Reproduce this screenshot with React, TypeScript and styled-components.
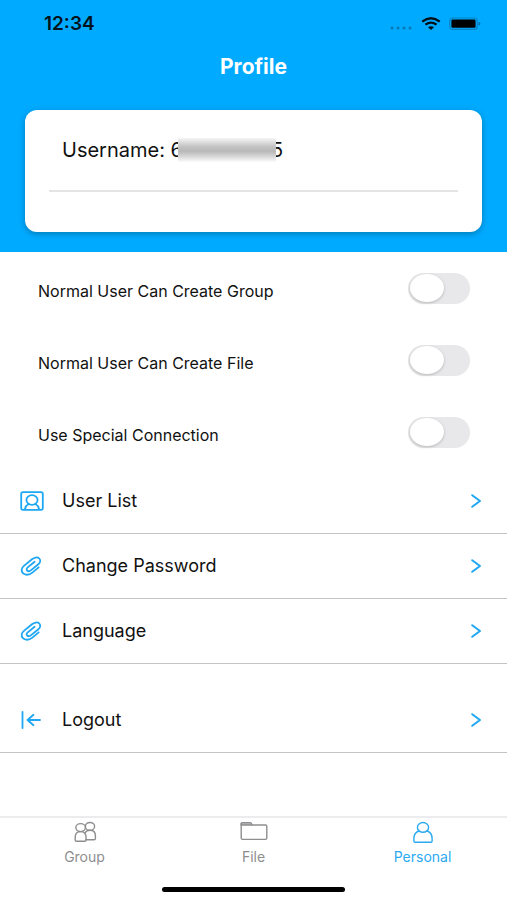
import React, { useState } from "react";
import styled, { createGlobalStyle } from "styled-components";

const blue = "#00aaff";
const iconBlue = "#1ea7f2";

const GlobalStyle = createGlobalStyle`
  *, *::before, *::after { box-sizing: border-box; }
  body {
    margin: 0;
    background: #fff;
    color: #111;
    font-family: Inter, "Liberation Sans", sans-serif;
  }
  button, input { font: inherit; }
`;

const Screen = styled.div`
  display: flex;
  flex-direction: column;
  min-height: 100vh;
  background: #fff;
`;

const Header = styled.header`
  background: ${blue};
  padding-bottom: 20px;
`;

const StatusBar = styled.div`
  display: flex;
  align-items: center;
  justify-content: space-between;
  height: 48px;
  padding: 0 26px 0 44px;
`;

const Clock = styled.time`
  font-size: 19px;
  line-height: 24px;
  font-weight: 600;
  color: #04121c;
`;

const StatusIcons = styled.div`
  display: flex;
  align-items: center;
  gap: 8px;
`;

const Title = styled.h1`
  margin: 0;
  padding: 6px 0 30px;
  text-align: center;
  font-size: 21px;
  line-height: 26px;
  font-weight: 700;
  color: #fff;
`;

const Card = styled.section`
  margin: 0 25px;
  padding: 0 24px 40px;
  border-radius: 12px;
  background: #fff;
  box-shadow: 0 2px 6px rgba(0, 0, 0, 0.28);
`;

const Username = styled.p`
  display: flex;
  align-items: center;
  margin: 0;
  height: 82px;
  padding-left: 13px;
  border-bottom: 2px solid #e4e4e6;
  font-size: 20px;
  line-height: 24px;
  white-space: pre;
`;

const Redacted = styled.span`
  width: 98px;
  height: 24px;
  margin: 0 -5px;
  z-index: 1;
  background: linear-gradient(#f6f6f6, #c4c4c4 35%, #b8b8b8 55%, #d4d4d4 75%, #fcfcfc);
`;

const Main = styled.main`
  flex: 1;
`;

const SwitchRow = styled.label`
  display: flex;
  align-items: center;
  justify-content: space-between;
  height: 72px;
  padding: 0 37px 0 38px;
  cursor: pointer;
`;

const SwitchText = styled.span`
  padding-top: 6px;
  font-size: 16px;
  line-height: 20px;
`;

const Switch = styled.input`
  appearance: none;
  flex: none;
  display: flex;
  align-items: center;
  width: 62px;
  height: 31px;
  margin: 0;
  padding: 0 2px;
  border-radius: 16px;
  background: #e8e8ea;
  cursor: pointer;

  &::before {
    content: "";
    width: 34px;
    height: 28px;
    border-radius: 50%;
    background: #fff;
    box-shadow: 0 1px 3px rgba(0, 0, 0, 0.22);
  }

  &:checked {
    justify-content: flex-end;
    background: ${blue};
  }
`;

const Menu = styled.nav`
  display: flex;
  flex-direction: column;
  padding-top: 1px;
`;

const MenuItem = styled.button<{ $spaced?: boolean }>`
  display: grid;
  grid-template-columns: 24px 1fr 12px;
  column-gap: 18px;
  align-items: center;
  height: 65px;
  margin: ${(p) => (p.$spaced ? "24px" : 0)} 0 0;
  padding: 0 25px 0 20px;
  border: 0;
  border-bottom: 1px solid #c4c4c6;
  background: none;
  color: inherit;
  text-align: left;
  font-size: 18px;
  line-height: 24px;
  cursor: pointer;
`;

const Icon = styled.svg`
  display: block;
  fill: none;
  stroke: currentColor;
  stroke-linecap: round;
  stroke-linejoin: round;
`;

const BlueIcon = styled(Icon)`
  color: ${iconBlue};
`;

const Footer = styled.footer`
  border-top: 2px solid #ececee;
`;

const Tabs = styled.nav`
  display: grid;
  grid-template-columns: repeat(3, 1fr);
`;

const Tab = styled.button<{ $active?: boolean }>`
  display: flex;
  flex-direction: column;
  align-items: center;
  gap: 4px;
  padding: 3px 0 0;
  border: 0;
  background: none;
  color: ${(p) => (p.$active ? "#2caaf0" : "#8e8e90")};
  font-size: 14px;
  line-height: 16px;
  cursor: pointer;
`;

const HomeIndicator = styled.div`
  width: 36%;
  height: 5px;
  margin: 22px auto 8px;
  border-radius: 3px;
  background: #000;
`;

const SignalIcon = () => (
  <Icon width="24" height="18" viewBox="0 0 24 18" aria-hidden="true">
    <g fill="#0878b4" stroke="none">
      <circle cx="3" cy="13" r="1.5" />
      <circle cx="9" cy="13" r="1.5" />
      <circle cx="15" cy="13" r="1.5" />
      <circle cx="21" cy="13" r="1.5" />
    </g>
  </Icon>
);

const WifiIcon = () => (
  <Icon width="20" height="14" viewBox="0 0 20 14" aria-hidden="true" color="#041018">
    <path d="M1.2 4.6Q10-2 18.8 4.6" strokeWidth="2.3" strokeLinecap="butt" />
    <path d="M4.4 7.7Q10 3.4 15.6 7.7" strokeWidth="2.2" strokeLinecap="butt" />
    <path d="M7 10.3Q10 8 13 10.3L10 13Z" fill="currentColor" stroke="none" />
  </Icon>
);

const BatteryIcon = () => (
  <Icon width="32" height="14" viewBox="0 0 32 14" aria-hidden="true">
    <rect x="0.7" y="1" width="27.6" height="11.4" rx="3" stroke="#0782c3" strokeWidth="1.2" />
    <rect x="2.4" y="2.6" width="24.2" height="8.2" rx="1.4" fill="#000" stroke="none" />
    <path d="M29.6 4.8Q31.4 5.4 31.4 6.7T29.6 8.7Z" fill="#0670a8" stroke="none" />
  </Icon>
);

const UserListIcon = () => (
  <BlueIcon width="24" height="20" viewBox="0 0 24 20" strokeWidth="1.8" aria-hidden="true">
    <rect x="1.2" y="1.2" width="21.6" height="17.6" rx="1.8" />
    <ellipse cx="12" cy="9" rx="5.6" ry="4.8" />
    <path d="M5 18Q5.6 14.6 8.6 13M19 18Q18.4 14.6 15.4 13" />
  </BlueIcon>
);

const ClipIcon = () => (
  <BlueIcon width="24" height="20" viewBox="0 0 24 20" strokeWidth="1.8" aria-hidden="true">
    <path d="M18.7 11.4L12 16.9C9 19.4 4.8 19.2 2.9 17.2C.8 15 1.4 11.9 4.2 9.6L12 3.2C14 1.5 17.6.7 19.3 2.5C20.9 4.2 20.4 6.5 18.4 8.2L10.8 14.4C9.7 15.3 8 15.4 7.1 14.5C6.2 13.5 6.6 12.3 7.7 11.4L14.6 5.8" />
  </BlueIcon>
);

const LogoutIcon = () => (
  <BlueIcon width="24" height="20" viewBox="0 0 24 20" strokeWidth="1.8" aria-hidden="true">
    <path d="M2.5 2V18M7.5 10H20M13.5 4.8L7.5 10L13.5 15.2" />
  </BlueIcon>
);

const ChevronIcon = () => (
  <BlueIcon width="12" height="16" viewBox="0 0 12 16" strokeWidth="2" aria-hidden="true">
    <path d="M2.2 2.2L10 8L2.2 13.8" />
  </BlueIcon>
);

const GroupIcon = () => (
  <Icon width="28" height="24" viewBox="0 0 28 24" strokeWidth="1.4" aria-hidden="true">
    <ellipse cx="9.6" cy="6.6" rx="4.8" ry="4" />
    <ellipse cx="19" cy="5.4" rx="4.6" ry="3.9" />
    <path d="M4.2 19V16C4.2 12.9 6.2 10.6 9.6 10.6S15 12.9 15 16V19Q15 20.2 13.8 20.2H5.4Q4.2 20.2 4.2 19Z" />
    <path d="M15 18.8H23.2Q24.4 18.8 24.4 17.6V14.8C24.4 11.5 22.4 9.3 19 9.3C16.8 9.3 15 10.2 14 11.9" />
  </Icon>
);

const FolderIcon = () => (
  <Icon width="28" height="24" viewBox="0 0 28 24" strokeWidth="1.4" aria-hidden="true">
    <path d="M1.2 4V2.7Q1.2 1.6 2.2 1.6H10.4Q11.6 1.6 12 4" fill="#b8b8ba" />
    <path d="M1.2 2.8V17Q1.2 18.4 2.6 18.4H25.4Q26.8 18.4 26.8 17V5.4Q26.8 4 25.4 4H1.2" />
  </Icon>
);

const PersonIcon = () => (
  <Icon width="28" height="24" viewBox="0 0 28 24" strokeWidth="1.4" aria-hidden="true">
    <ellipse cx="14" cy="6.4" rx="5.6" ry="4.9" />
    <path d="M9.9 10C6.4 11.4 4.9 14 4.9 17.4V20Q4.9 21.2 6.1 21.2H21.9Q23.1 21.2 23.1 20V17.4C23.1 14 21.6 11.4 18.1 10" />
  </Icon>
);

const settings = [
  "Normal User Can Create Group",
  "Normal User Can Create File",
  "Use Special Connection",
];

const menuItems = [
  { label: "User List", Glyph: UserListIcon },
  { label: "Change Password", Glyph: ClipIcon },
  { label: "Language", Glyph: ClipIcon },
  { label: "Logout", Glyph: LogoutIcon, spaced: true },
];

const tabs = [
  { label: "Group", Glyph: GroupIcon },
  { label: "File", Glyph: FolderIcon },
  { label: "Personal", Glyph: PersonIcon },
];

export default function App() {
  const [enabled, setEnabled] = useState<Record<string, boolean>>({});
  const [activeTab, setActiveTab] = useState("Personal");

  return (
    <Screen>
      <GlobalStyle />
      <Header>
        <StatusBar>
          <Clock>12:34</Clock>
          <StatusIcons>
            <SignalIcon />
            <WifiIcon />
            <BatteryIcon />
          </StatusIcons>
        </StatusBar>
        <Title>Profile</Title>
        <Card>
          <Username>
            Username: 6<Redacted />5
          </Username>
        </Card>
      </Header>
      <Main>
        {settings.map((label) => (
          <SwitchRow key={label}>
            <SwitchText>{label}</SwitchText>
            <Switch
              type="checkbox"
              role="switch"
              checked={!!enabled[label]}
              onChange={(e) => setEnabled({ ...enabled, [label]: e.target.checked })}
            />
          </SwitchRow>
        ))}
        <Menu>
          {menuItems.map(({ label, Glyph, spaced }) => (
            <MenuItem key={label} type="button" $spaced={spaced}>
              <Glyph />
              <span>{label}</span>
              <ChevronIcon />
            </MenuItem>
          ))}
        </Menu>
      </Main>
      <Footer>
        <Tabs>
          {tabs.map(({ label, Glyph }) => (
            <Tab
              key={label}
              type="button"
              $active={activeTab === label}
              onClick={() => setActiveTab(label)}
            >
              <Glyph />
              {label}
            </Tab>
          ))}
        </Tabs>
        <HomeIndicator />
      </Footer>
    </Screen>
  );
}
